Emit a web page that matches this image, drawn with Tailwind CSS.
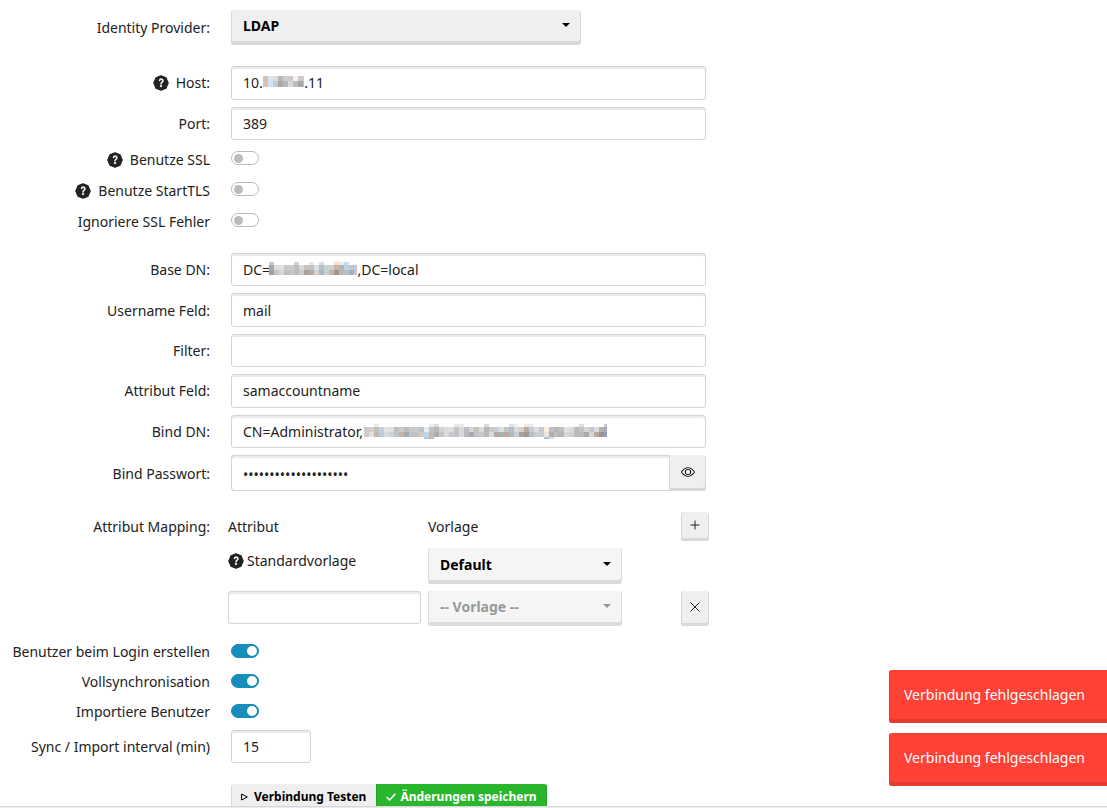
<!DOCTYPE html>
<html lang="de">
<head>
<meta charset="utf-8">
<meta name="viewport" content="width=device-width, initial-scale=1">
<title>Identity Provider</title>
<script src="https://cdn.jsdelivr.net/npm/@tailwindcss/browser@4"></script>
</head>
<body class="flex h-screen flex-col overflow-hidden bg-white font-['Noto_Sans',sans-serif] text-sm text-[#222]">
<svg class="hidden">
  <symbol id="help" viewBox="0 0 16 16"><path fill="#222" stroke="#222" stroke-width="1.200" stroke-linejoin="round" d="M8 .8L10.600 1.900L13.100 2.900L14.100 5.400L15.200 8L14.100 10.600L13.100 13.100L10.600 14.100L8 15.200L5.400 14.100L2.900 13.100L1.900 10.600L.8 8L1.900 5.400L2.900 2.900L5.400 1.900z"/><path fill="#fff" stroke="#fff" stroke-width=".3" d="M7.002 11a1 1 0 1 0 2 0 1 1 0 0 0-2 0zm1.602-2.027c.04-.534.198-.815.846-1.26.674-.475 1.05-1.09 1.05-1.986 0-1.325-.92-2.227-2.262-2.227-1.02 0-1.792.492-2.1 1.29A1.71 1.71 0 0 0 6 5.48c0 .393.203.64.545.64.272 0 .455-.147.564-.51.158-.592.525-.915 1.074-.915.61 0 1.03.446 1.03 1.084 0 .563-.208.885-.822 1.325-.619.433-.926.914-.926 1.64v.111c0 .428.208.745.585.745.336 0 .504-.24.554-.627z"/></symbol>
  <symbol id="caret" viewBox="0 0 8 4"><path d="M0 0h8L4 4z"/></symbol>
</svg>

<form class="min-h-0 grow overflow-hidden pt-[10px]">
  <div class="grid grid-cols-[210px_1fr] items-center gap-x-[21px]">
    <label for="idp" class="text-right">Identity Provider:</label>
    <div class="relative w-full max-w-[350px]">
      <select id="idp" class="h-[35px] w-full appearance-none rounded-[3px] bg-[#efefef] pb-[3px] pl-3 font-bold text-black shadow-[inset_1px_0_0_#d9d9d9,inset_-1px_-4px_0_#d9d9d9]"><option>LDAP</option></select>
      <svg class="pointer-events-none absolute top-[13px] right-[11px] h-1 w-2"><use href="#caret"/></svg>
    </div>
  </div>

  <div class="mt-[21px] grid h-[74px] auto-rows-fr grid-cols-[210px_1fr] items-center gap-x-[21px] gap-y-[7px]">
    <label for="host" class="flex items-center justify-end gap-[7px]"><svg class="size-4"><use href="#help"/></svg>Host:</label>
    <div class="relative h-full w-full max-w-[475px]">
      <input id="host" value="10.&nbsp;&nbsp;&nbsp;&nbsp;&nbsp;&nbsp;&nbsp;&nbsp;&nbsp;&nbsp;&nbsp;&#8202;.11" class="h-full w-full rounded-[3px] border border-[#cfd3da] px-[11px] shadow-[inset_0_2px_0_#ebebeb]">
      <svg data-mosaic="host" class="absolute top-[9px] left-[32px] h-4 w-[41px]"></svg>
    </div>
    <label for="port" class="pt-px text-right">Port:</label>
    <input id="port" value="389" class="h-full w-full max-w-[475px] rounded-[3px] border border-[#cfd3da] px-[11px] shadow-[inset_0_2px_0_#ebebeb]">
  </div>

  <div class="mt-1 grid auto-rows-[31px] grid-cols-[210px_1fr] items-center gap-x-[21px]">
    <label for="ssl" class="flex items-center justify-end gap-[7px]"><svg class="size-4"><use href="#help"/></svg>Benutze SSL</label>
    <input id="ssl" type="checkbox" class="mb-[3px] flex h-[14px] w-7 appearance-none items-center justify-start rounded-full border border-[#bbb] px-[2px] before:size-[9px] before:rounded-full before:bg-[#bbb] checked:justify-end checked:border-[#168dba] checked:bg-[#168dba] checked:before:bg-white">
    <label for="tls" class="flex items-center justify-end gap-[7px]"><svg class="size-4"><use href="#help"/></svg>Benutze StartTLS</label>
    <input id="tls" type="checkbox" class="mb-[3px] flex h-[14px] w-7 appearance-none items-center justify-start rounded-full border border-[#bbb] px-[2px] before:size-[9px] before:rounded-full before:bg-[#bbb] checked:justify-end checked:border-[#168dba] checked:bg-[#168dba] checked:before:bg-white">
    <label for="ign" class="text-right">Ignoriere SSL Fehler</label>
    <input id="ign" type="checkbox" class="mb-[3px] flex h-[14px] w-7 appearance-none items-center justify-start rounded-full border border-[#bbb] px-[2px] before:size-[9px] before:rounded-full before:bg-[#bbb] checked:justify-end checked:border-[#168dba] checked:bg-[#168dba] checked:before:bg-white">
  </div>

  <div class="mt-4 grid h-[195px] auto-rows-fr grid-cols-[210px_1fr] items-center gap-x-[21px] gap-y-[7px]">
    <label for="base" class="text-right">Base DN:</label>
    <div class="relative h-full w-full max-w-[475px]">
      <input id="base" value="DC=&nbsp;&nbsp;&nbsp;&nbsp;&nbsp;&nbsp;&nbsp;&nbsp;&nbsp;&nbsp;&nbsp;&nbsp;&nbsp;&nbsp;&nbsp;&nbsp;&nbsp;&nbsp;&nbsp;&nbsp;&nbsp;&nbsp;&nbsp;&nbsp;,DC=local" class="h-full w-full rounded-[3px] border border-[#cfd3da] px-[11px] shadow-[inset_0_2px_0_#ebebeb]">
      <svg data-mosaic="base" class="absolute top-[9px] left-[38px] h-4 w-[88px]"></svg>
    </div>
    <label for="user" class="pt-px text-right">Username Feld:</label>
    <input id="user" value="mail" class="h-full w-full max-w-[475px] rounded-[3px] border border-[#cfd3da] px-[11px] shadow-[inset_0_2px_0_#ebebeb]">
    <label for="filter" class="pt-px text-right">Filter:</label>
    <input id="filter" class="h-full w-full max-w-[475px] rounded-[3px] border border-[#cfd3da] px-[11px] shadow-[inset_0_2px_0_#ebebeb]">
    <label for="attr" class="pt-px text-right">Attribut Feld:</label>
    <input id="attr" value="samaccountname" class="h-full w-full max-w-[475px] rounded-[3px] border border-[#cfd3da] px-[11px] shadow-[inset_0_2px_0_#ebebeb]">
    <label for="bind" class="pt-px text-right">Bind DN:</label>
    <div class="relative h-full w-full max-w-[475px]">
      <input id="bind" value="CN=Administrator," class="h-full w-full rounded-[3px] border border-[#cfd3da] px-[11px] shadow-[inset_0_2px_0_#ebebeb]">
      <svg data-mosaic="bind" class="absolute top-[9px] left-[133px] h-4 w-[243px]"></svg>
    </div>
  </div>

  <div class="mt-[7px] grid grid-cols-[210px_1fr] items-center gap-x-[21px]">
    <label for="pw" class="pt-px text-right">Bind Passwort:</label>
    <div class="flex h-9 w-full max-w-[475px]">
      <input id="pw" type="password" value="aaaaaaaaaaaaaaaaaaaa" class="min-w-0 grow rounded-l-[3px] border border-r-0 border-[#cfd3da] px-[11px] pt-[3px] shadow-[inset_0_2px_0_#ebebeb]">
      <button type="button" aria-label="Passwort anzeigen" class="flex w-[37px] items-center justify-center rounded-r-[3px] bg-[#efefef] pb-[2px] text-black shadow-[inset_1px_0_0_#d9d9d9,inset_-1px_-3px_0_#d9d9d9]">
        <svg class="size-[14px]" viewBox="0 0 16 16" fill="currentColor"><path d="M16 8s-3-5.500-8-5.500S0 8 0 8s3 5.500 8 5.500S16 8 16 8M1.173 8a13 13 0 0 1 1.660-2.043C4.120 4.668 5.880 3.500 8 3.500s3.879 1.168 5.168 2.457A13 13 0 0 1 14.828 8q-.086.130-.195.288c-.335.480-.830 1.120-1.465 1.755C11.879 11.332 10.119 12.500 8 12.500s-3.879-1.168-5.168-2.457A13 13 0 0 1 1.172 8z"/><path d="M8 5.500a2.500 2.500 0 1 0 0 5 2.500 2.500 0 0 0 0-5M4.500 8a3.500 3.500 0 1 1 7 0 3.500 3.500 0 0 1-7 0"/></svg>
      </button>
    </div>
  </div>

  <div class="mt-[21px] grid grid-cols-[210px_1fr] gap-x-[18px]">
    <span class="pt-[5px] text-right">Attribut Mapping:</span>
    <div class="grid w-full max-w-[481px] grid-cols-[193px_194px_1fr] gap-[7px]">
      <span class="pt-[5px]">Attribut</span>
      <span class="pt-[5px]">Vorlage</span>
      <button type="button" aria-label="Hinzufügen" class="flex h-[29px] w-7 items-center justify-center justify-self-end rounded-[3px] bg-[#efefef] pb-[3px] shadow-[inset_1px_0_0_#d9d9d9,inset_-1px_-3px_0_#d9d9d9]">
        <svg class="size-[10px]" viewBox="0 0 10 10" fill="none" stroke="currentColor"><path d="M5 .5v9M.5 5h9"/></svg>
      </button>

      <label for="std" class="flex items-center gap-[3px] self-start pt-[3px]"><svg class="size-4"><use href="#help"/></svg>Standardvorlage</label>
      <div class="relative">
        <select id="std" class="h-9 w-full appearance-none rounded-[3px] bg-[#f5f5f5] pb-[2px] pl-3 font-bold text-black shadow-[inset_1px_0_0_#dcdcdc,inset_-1px_-4px_0_#dcdcdc]"><option>Default</option></select>
        <svg class="pointer-events-none absolute top-[14px] right-[11px] h-1 w-2"><use href="#caret"/></svg>
      </div>
      <span></span>

      <input aria-label="Attribut" class="h-[33px] w-full rounded-[3px] border border-[#cfd3da] px-[11px] shadow-[inset_0_2px_0_#ebebeb]">
      <div class="relative">
        <select aria-label="Vorlage" disabled class="h-[35px] w-full appearance-none rounded-[3px] bg-[#f5f5f5] pb-[3px] pl-3 font-bold text-[#999] opacity-100 shadow-[inset_1px_0_0_#dcdcdc,inset_-1px_-4px_0_#dcdcdc]"><option>-- Vorlage --</option></select>
        <svg class="pointer-events-none absolute top-[13px] right-[11px] h-1 w-2 fill-[#999]"><use href="#caret"/></svg>
      </div>
      <button type="button" aria-label="Entfernen" class="flex h-[35px] w-7 items-center justify-center justify-self-end rounded-[3px] bg-[#efefef] pb-[3px] shadow-[inset_1px_0_0_#d9d9d9,inset_-1px_-3px_0_#d9d9d9]">
        <svg class="size-[10px]" viewBox="0 0 10 10" fill="none" stroke="currentColor"><path d="M.5.5l9 9M9.500.5l-9 9"/></svg>
      </button>
    </div>
  </div>

  <div class="mt-[11px] grid auto-rows-[30px] grid-cols-[210px_1fr] items-center gap-x-[21px]">
    <label for="create" class="text-right">Benutzer beim Login erstellen</label>
    <input id="create" type="checkbox" checked class="mb-[2px] flex h-[14px] w-7 appearance-none items-center justify-start rounded-full border border-[#bbb] px-px before:size-[10px] before:rounded-full before:bg-[#bbb] checked:justify-end checked:border-[#168dba] checked:bg-[#168dba] checked:before:bg-white">
    <label for="full" class="text-right">Vollsynchronisation</label>
    <input id="full" type="checkbox" checked class="mb-[2px] flex h-[14px] w-7 appearance-none items-center justify-start rounded-full border border-[#bbb] px-px before:size-[10px] before:rounded-full before:bg-[#bbb] checked:justify-end checked:border-[#168dba] checked:bg-[#168dba] checked:before:bg-white">
    <label for="import" class="text-right">Importiere Benutzer</label>
    <input id="import" type="checkbox" checked class="mb-[2px] flex h-[14px] w-7 appearance-none items-center justify-start rounded-full border border-[#bbb] px-px before:size-[10px] before:rounded-full before:bg-[#bbb] checked:justify-end checked:border-[#168dba] checked:bg-[#168dba] checked:before:bg-white">
  </div>

  <div class="mt-[3px] grid grid-cols-[210px_1fr] items-center gap-x-[21px]">
    <label for="sync" class="text-right">Sync / Import interval (min)</label>
    <input id="sync" value="15" class="h-[33px] w-20 rounded-[3px] border border-[#cfd3da] px-[11px] shadow-[inset_0_2px_0_#ebebeb]">
  </div>

  <div class="mt-[21px] flex pl-[231px] text-xs font-bold">
    <button type="button" class="flex h-[30px] items-center gap-[6px] rounded-l-[3px] bg-[#efefef] pr-[10px] pb-1 pl-[10px] text-black shadow-[inset_1px_-3px_0_#d9d9d9]">
      <svg class="h-2 w-[7px]" viewBox="0 0 7 8" fill="none" stroke="currentColor"><path d="M.6 1v6L6.300 4z"/></svg>Verbindung Testen
    </button>
    <button type="submit" class="flex h-[30px] items-center gap-1 rounded-r-[3px] bg-[#28b62c] pr-[10px] pb-1 pl-[10px] text-white shadow-[inset_1px_0_0_#23a127,inset_-1px_-3px_0_#23a127]">
      <svg class="h-[8px] w-[10px]" viewBox="0 0 10 8" fill="none" stroke="currentColor" stroke-width="1.500"><path d="M.6 4l3 3L9.400.8"/></svg>Änderungen speichern
    </button>
  </div>
</form>

<footer class="h-[2px] shrink-0 border-t border-[#d6d6d6] bg-[#ececec]"></footer>

<div role="alert" class="absolute right-0 bottom-[22px] flex flex-col gap-[10px] text-white">
  <div class="flex h-[53px] w-[218px] items-center rounded-l-[3px] bg-[#ff4136] pb-[3px] pl-[15px] shadow-[inset_1px_-4px_0_#e63a31]">Verbindung fehlgeschlagen</div>
  <div class="flex h-[53px] w-[218px] items-center rounded-l-[3px] bg-[#ff4136] pb-[3px] pl-[15px] shadow-[inset_1px_-4px_0_#e63a31]">Verbindung fehlgeschlagen</div>
</div>

<script>
// Pixelated blocks that hide private values: each row is [y, height, cell colours].
const mosaics = {
  host: [
    [1, 5, '#d8bfa9 #d5e6f5 #dcdcdc #b9b9b9 #d0cfce #c9c9c9 #f5f0e8 #cfc8c6 #d9c7c5'],
    [6, 6, '#d9c4b2 #d0e3f2 #c9cbd0 #aaaaaa #b5b6b6 #d8d8d8 #bdbdbd #a5a8ad #cdbdbc']
  ],
  base: [
    [0, 3, '#c8c8ca - - - - #d3d3d3 - - #e5e5e5 - #dbdbdb - - #f2dfcf #e2eef5 #c8dce8 - -'],
    [3, 5, '#a9a6a8 #d9dde0 #e0e0dc #c6c9ce #cbcbcb #bdbdbd #dad9d8 #c7c3bf #c0c4c8 #dfe2e3 #b7bfc6 #c4d2d8 #d6d0c9 #c7b7aa #b7b5b1 #bdd1df #c0c6ce #c9c9ca'],
    [8, 5, '#a39d9b #c5c5c6 #d6d6d6 #babec2 #c9c5be #b9bdc1 #cbcbce #a7a39b #b9a99d #d0d1d5 #a5bbc9 #d1d1d1 #bbb6b3 #a0968f #c5b7ac #b9c0c2 #9fb2c5 #c6c6cb']
  ],
  bind: [
    [0, 3, '- - #e8e8e8 - - - - - - - - - - #ececec #ddd - - - #e8e8e8 #ebebeb - - - - #d8d8d8 - - - - #dedede #efefef - #f5e7dc #e6f0f6 - - - - - - - - - #dedede - - - - #c9c9c9'],
    [3, 5, '#cdc9c6 #d3cdc8 #c3c0bc #c2cfdb #e0e3e6 #dfdfdf #bfbfbf #c5cbd0 #bcbcbc #c9c9c9 #cacaca #bfc2c7 #e5edf2 #c2c2c2 #b8b8b8 #cfd3d6 #dedcda #d8dde0 #c7c3bf #d6d6d6 #bcbfc5 #d5d5d5 #c5c2c1 #d9dbdd #b6b6b6 #c9c9cc #c9cfd4 #dfdfdf #c5c5c5 #aec0cd #dadada #d8cfc8 #b9aba0 #c3ced6 #ddd #c4c8d1 #f8efe1 #bfc0c6 #b6b6b6 #c1c1c6 #e2e2e2 #d7dce0 #bcbcbf #c5c2c0 #d5d5d5 #c8c8c8 #d9dde0 #b8b2ad #a6aab9'],
    [8, 5, '#d2ccc7 #dbe0e2 #c3b8b0 #b9ccdc #d6dadd #d0d0d0 #bdc3c7 #c5b4a8 #a6a9ab #bfc3c8 #c0c0c0 #ceccc8 #c6d5e3 #bcbcbc #adadad #c5c5c5 #dbdbdb #c5c9d3 #c2c5c7 #dadada #b7bcbe #aaa #c5c3c9 #c8c8c8 #bbb #d8d8da #afaaa6 #acafb0 #b7a99d #a9bac8 #c9ced1 #aaa19b #a1968f #b1c1cb #cecece #c8cbd2 #eee4d3 #aaafba #bcbcbc #b5b5ba #d8d8d8 #cfd4d9 #bbb #bfb9b5 #aaaeab #d5d5d5 #b9ac9f #9a958f #969fb1'],
    [13, 2, '- - - - - - - - - - - - #b9c9d6 #cbb6a5 - - - - - - - - - - - - - - - - - - - - - - #a5c8df #e0ded8']
  ]
};
for (const svg of document.querySelectorAll('[data-mosaic]')) {
  for (const [y, height, cells] of mosaics[svg.dataset.mosaic]) {
    cells.split(' ').forEach((fill, i) => {
      if (fill === '-') return;
      const r = document.createElementNS('http://www.w3.org/2000/svg', 'rect');
      for (const [k, v] of Object.entries({ x: i * 5, y, width: 5, height, fill })) r.setAttribute(k, v);
      svg.append(r);
    });
  }
}
</script>
</body>
</html>
